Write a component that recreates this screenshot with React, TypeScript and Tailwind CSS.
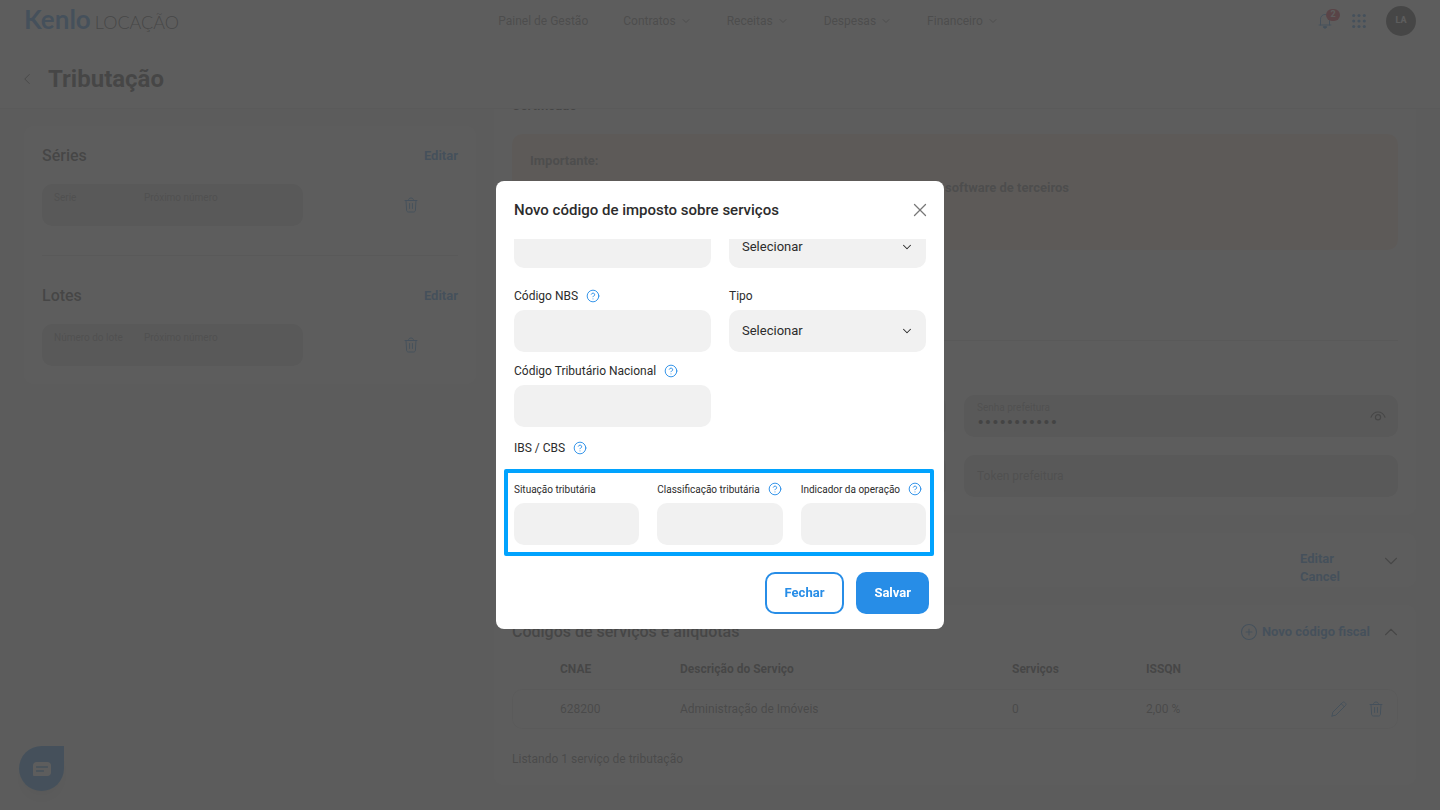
import type { ReactNode } from "react";
import { ChevronDown, ChevronLeft, ChevronUp, CircleHelp, CirclePlus, X } from "lucide-react";

const MENU = ["Contratos", "Receitas", "Despesas", "Financeiro"];

function TrashIcon() {
  return (
    <svg width="14" height="16" viewBox="0 0 14 16" fill="none" stroke="currentColor" strokeLinecap="round" strokeLinejoin="round">
      <path d="M1 3.5h12M4.5 3.3C4.5 1.8 5.4 1 7 1s2.5.8 2.5 2.3M2 3.7l.6 9.6c.1 1 .7 1.7 1.7 1.7h5.4c1 0 1.6-.7 1.7-1.7l.6-9.6M5.6 6.5v5M8.4 6.5v5" />
    </svg>
  );
}

function PencilIcon() {
  return (
    <svg width="16" height="16" viewBox="0 0 16 16" fill="none" stroke="currentColor" strokeLinecap="round" strokeLinejoin="round">
      <path d="M1 15l.8-3.8L11.6 1.4c.6-.6 1.5-.6 2.1 0l.9.9c.6.6.6 1.5 0 2.1L4.8 14.2 1 15zM10.3 2.8l2.9 2.9" />
    </svg>
  );
}

function EyeIcon() {
  return (
    <svg width="16" height="10" viewBox="0 0 16 10" fill="none" stroke="currentColor" strokeWidth="1.2" strokeLinecap="round">
      <path d="M1 6.2C2.3 2.8 4.8 1 8 1s5.7 1.8 7 5.2" />
      <circle cx="8" cy="6.3" r="2.6" />
    </svg>
  );
}

function BellIcon() {
  return (
    <svg width="14" height="16" viewBox="0 0 14 16" fill="none" stroke="currentColor" strokeLinecap="round" strokeLinejoin="round">
      <path d="M1 12h12M2.5 12V6.2C2.5 3.4 4.4 1.5 7 1.5s4.5 1.9 4.5 4.7V12" />
      <path d="M5.3 14a1.7 1.2 0 0 0 3.4 0z" fill="currentColor" />
    </svg>
  );
}

function AppsIcon() {
  return (
    <svg width="14" height="16" viewBox="0 0 14 16" fill="currentColor">
      {[2.5, 8, 13.5].map((y) => [1.7, 7, 12.3].map((x) => <circle key={`${x}-${y}`} cx={x} cy={y} r="1.6" />))}
    </svg>
  );
}

function Help() {
  return <CircleHelp size={14} strokeWidth={1.6} className="shrink-0 text-[#278de7]" />;
}

function Field({ id, label, small, help, children }: { id: string; label: string; small?: boolean; help?: boolean; children?: ReactNode }) {
  return (
    <div>
      <div className="flex h-7 items-center gap-2">
        <label htmlFor={id} className={small ? "text-[10px] whitespace-nowrap" : "text-[12px] whitespace-nowrap"}>
          {label}
        </label>
        {help && <Help />}
      </div>
      {children ?? <input id={id} type="text" className="block h-[42px] w-full rounded-[10px] bg-[#f1f1f1] px-[13px] text-[13px]" />}
    </div>
  );
}

function SelectBox({ id, label }: { id: string; label?: string }) {
  return (
    <div className="relative">
      <select id={id} aria-label={label} className="block h-[42px] w-full appearance-none rounded-[10px] bg-[#f1f1f1] px-[13px] text-[13px]">
        <option>Selecionar</option>
      </select>
      <ChevronDown size={14} strokeWidth={1.8} className="pointer-events-none absolute top-3.5 right-3" />
    </div>
  );
}

function NumberBlock({ title, first, id }: { title: string; first: string; id: string }) {
  return (
    <section>
      <div className="flex h-6 items-center justify-between">
        <h2 className="text-base font-medium">{title}</h2>
        <button type="button" className="text-[13px] font-bold text-[#278de7]">Editar</button>
      </div>
      <div className="mt-4 flex items-center">
        <div className="flex w-[261px] rounded-[10px] bg-[#d8d8d8] text-[10px] text-[#888]">
          <div className="flex h-[42px] w-[90px] flex-col pt-2 pl-3">
            <label htmlFor={`${id}-first`} className="leading-3 whitespace-nowrap">{first}</label>
            <input id={`${id}-first`} type="text" className="h-4 w-full" />
          </div>
          <div className="flex h-[42px] flex-1 flex-col pt-2 pl-3">
            <label htmlFor={`${id}-next`} className="leading-3">Próximo número</label>
            <input id={`${id}-next`} type="text" className="h-4 w-full" />
          </div>
        </div>
        <div className="flex flex-1 justify-end pr-10">
          <button type="button" aria-label="Excluir" className="text-[#278de7]"><TrashIcon /></button>
        </div>
      </div>
    </section>
  );
}

function Header() {
  return (
    <header className="border-b border-[#e4e4e4] bg-white">
      <div className="flex h-[42px] items-center justify-between px-6">
        <a href="#" className="flex items-baseline gap-1 pb-0.5 font-['Lato',sans-serif]">
          <span className="text-[26px] leading-7 font-bold text-[#278de7]">Kenlo</span>
          <span className="text-[18px] leading-7 font-light">LOCAÇÃO</span>
        </a>
        <nav className="flex items-center gap-[35px] text-[12px] text-[#6c6c6c]">
          <a href="#">Painel de Gestão</a>
          {MENU.map((item) => (
            <button key={item} type="button" className="flex items-center gap-1">
              {item}
              <ChevronDown size={12} />
            </button>
          ))}
        </nav>
        <div className="flex items-center gap-5 text-[#278de7]">
          <button type="button" aria-label="Notificações" className="relative">
            <BellIcon />
            <span className="absolute -top-1 left-2 flex h-3 w-3.5 items-center justify-center rounded-full bg-[#d91e36] text-[9px] font-bold text-white">2</span>
          </button>
          <button type="button" aria-label="Aplicativos"><AppsIcon /></button>
          <button type="button" className="flex size-[30px] items-center justify-center rounded-full bg-[#333] text-[9px] font-bold text-white">LA</button>
        </div>
      </div>
      <div className="flex h-[66px] items-center gap-3 px-[18px] pt-2">
        <button type="button" aria-label="Voltar"><ChevronLeft size={18} strokeWidth={1.2} /></button>
        <h1 className="text-2xl font-bold">Tributação</h1>
      </div>
    </header>
  );
}

function Services() {
  return (
    <section className="rounded-[10px] bg-white px-[18px] pt-[15px] pb-4">
      <div className="flex h-6 items-center justify-between">
        <h2 className="text-base font-medium">Códigos de serviços e alíquotas</h2>
        <div className="flex items-center gap-2.5">
          <button type="button" className="flex items-center gap-1 text-[13px] font-bold text-[#278de7]">
            <CirclePlus size={18} strokeWidth={1.5} />
            Novo código fiscal
          </button>
          <button type="button" aria-label="Recolher" className="-mr-1"><ChevronUp size={22} strokeWidth={1.2} /></button>
        </div>
      </div>
      <table className="mt-1 w-full table-fixed border-separate border-spacing-0 text-left text-[12px]">
        <thead>
          <tr className="h-[41px]">
            <th className="w-12" />
            <th className="w-[120px] font-bold">CNAE</th>
            <th className="font-bold">Descrição do Serviço</th>
            <th className="w-[134px] font-bold">Serviços</th>
            <th className="w-[134px] font-bold">ISSQN</th>
            <th className="w-[118px]" />
          </tr>
        </thead>
        <tbody>
          <tr className="h-10 text-[#555]">
            <td className="rounded-l-[10px] border-y border-l border-[#e4e4e4]" />
            <td className="border-y border-[#e4e4e4]">628200</td>
            <td className="border-y border-[#e4e4e4]">Administração de Imóveis</td>
            <td className="border-y border-[#e4e4e4]">0</td>
            <td className="border-y border-[#e4e4e4]">2,00 %</td>
            <td className="rounded-r-[10px] border-y border-r border-[#e4e4e4]">
              <div className="flex justify-end gap-[22px] pr-[14px] text-[#278de7]">
                <button type="button" aria-label="Editar"><PencilIcon /></button>
                <button type="button" aria-label="Excluir"><TrashIcon /></button>
              </div>
            </td>
          </tr>
        </tbody>
      </table>
      <p className="mt-5 text-[12px] leading-5 text-[#555]">Listando 1 serviço de tributação</p>
    </section>
  );
}

function Certificate() {
  return (
    <section className="shrink-0 rounded-[10px] bg-white p-[18px]">
      <h2 className="text-[13px] leading-6 font-bold">Certificado</h2>
      <div className="mt-4 h-[116px] rounded-[10px] bg-[#fde4d2] px-[18px] py-[18px] text-[13px] leading-[18px] font-bold text-[#6c6c6c]">
        <p>Importante:</p>
        <p className="mt-[9px] w-[539px] text-right">em software de terceiros</p>
      </div>
      <hr className="mt-[90px] mb-[54px] border-[#d4d4d4]" />
      <div className="grid grid-cols-2 gap-[18px] text-[#888]">
        <input type="text" aria-label="Usuário prefeitura" className="h-[42px] rounded-[10px] bg-[#d8d8d8]" />
        <div className="flex h-[42px] items-center justify-between rounded-[10px] bg-[#d8d8d8] pr-3 pl-[13px]">
          <div className="flex flex-col">
            <label htmlFor="senha" className="text-[10px] leading-3">Senha prefeitura</label>
            <input id="senha" type="password" defaultValue="kenlo123456" className="h-4 font-['Inter',sans-serif] text-[13px] text-[#222]" />
          </div>
          <button type="button" aria-label="Mostrar senha" className="text-[#333]"><EyeIcon /></button>
        </div>
        <input type="text" aria-label="Inscrição" className="h-[42px] rounded-[10px] bg-[#d8d8d8]" />
        <input type="text" aria-label="Token prefeitura" placeholder="Token prefeitura" className="h-[42px] rounded-[10px] bg-[#d8d8d8] px-[13px] text-[12px] placeholder:text-[#888]" />
      </div>
    </section>
  );
}

function TaxCodeDialog() {
  return (
    <div role="dialog" aria-label="Novo código de imposto sobre serviços" className="flex h-[448px] w-[448px] flex-col rounded-lg bg-white pb-[15px] text-[#2c2c2c]">
      <div className="flex h-[58px] shrink-0 items-center justify-between px-[18px]">
        <h2 className="text-[15px] font-medium">Novo código de imposto sobre serviços</h2>
        <button type="button" aria-label="Fechar janela" className="-mr-[5px] text-[#777]"><X size={22} strokeWidth={1.4} /></button>
      </div>
      <div className="flex min-h-0 flex-1 flex-col justify-end overflow-hidden pr-[10px] pl-2">
        <div className="grid grid-cols-2 gap-x-[18px] pr-2 pl-[10px]">
          <input type="text" aria-label="Código do serviço" className="h-[42px] w-full rounded-[10px] bg-[#f1f1f1]" />
          <SelectBox id="regime" label="Regime" />
          <div className="pt-3.5">
            <Field id="nbs" label="Código NBS" help />
          </div>
          <div className="pt-3.5">
            <Field id="tipo" label="Tipo"><SelectBox id="tipo" /></Field>
          </div>
          <div className="pt-[5px]">
            <Field id="nacional" label="Código Tributário Nacional" help />
          </div>
        </div>
        <div className="my-[7px] flex h-7 shrink-0 items-center gap-2 pl-[10px] text-[12px]">
          IBS / CBS
          <Help />
        </div>
        <div className="grid grid-cols-3 gap-[18px] rounded-xs border-4 border-[#01a3fe] pt-0.5 pr-1 pb-[7px] pl-1.5">
          <Field id="situacao" label="Situação tributária" small />
          <Field id="classificacao" label="Classificação tributária" small help />
          <Field id="indicador" label="Indicador da operação" small help />
        </div>
      </div>
      <div className="flex shrink-0 justify-end gap-3 pt-4 pr-[15px] text-[13px] font-bold">
        <button type="button" className="h-[42px] rounded-[10px] border-2 border-[#278de7] px-[18px] text-[#278de7]">Fechar</button>
        <button type="button" className="h-[42px] rounded-[10px] bg-[#278de7] px-[18px] text-white">Salvar</button>
      </div>
    </div>
  );
}

export default function App() {
  return (
    <div className="flex h-screen flex-col overflow-hidden bg-[#f4f4f4] font-['Roboto',sans-serif] text-[#333]">
      <Header />
      <main className="grid min-h-0 flex-1 grid-cols-3 gap-[18px] px-6">
        <div className="pt-[17px]">
          <div className="rounded-[10px] bg-white p-[18px]">
            <NumberBlock title="Séries" first="Serie" id="serie" />
            <hr className="mt-[29px] mb-7 border-[#dcdcdc]" />
            <NumberBlock title="Lotes" first="Número do lote" id="lote" />
          </div>
        </div>
        {/* scrolled to the end, so the first card runs up under the header */}
        <div className="col-span-2 flex min-h-0 flex-col justify-end gap-[18px] overflow-hidden pb-[25px]">
          <Certificate />
          <section className="flex justify-end gap-10 rounded-[10px] bg-white px-[18px] pt-[17px] pb-px">
            <div className="flex flex-col items-start text-[13px] leading-[18px] font-bold text-[#278de7]">
              <button type="button">Editar</button>
              <button type="button">Cancel</button>
            </div>
            <button type="button" aria-label="Expandir" className="-mr-1 self-start"><ChevronDown size={22} strokeWidth={1.2} /></button>
          </section>
          <Services />
        </div>
      </main>
      <button type="button" aria-label="Chat" className="fixed bottom-[19px] left-[19px] flex size-[45px] items-center justify-center rounded-full rounded-tr-md bg-[#278de7] text-white shadow-lg">
        <svg width="18" height="14" viewBox="0 0 18 14">
          <path d="M4 0h10a4 4 0 0 1 4 4v6a4 4 0 0 1-4 4H1a1 1 0 0 1-1-1V4a4 4 0 0 1 4-4z" fill="currentColor" />
          <path d="M3.5 5h11M3.5 9h7" stroke="#278de7" strokeWidth="1.3" strokeLinecap="round" />
        </svg>
      </button>
      <div className="fixed inset-0 flex items-center justify-center bg-[#494949]/89">
        <TaxCodeDialog />
      </div>
    </div>
  );
}
